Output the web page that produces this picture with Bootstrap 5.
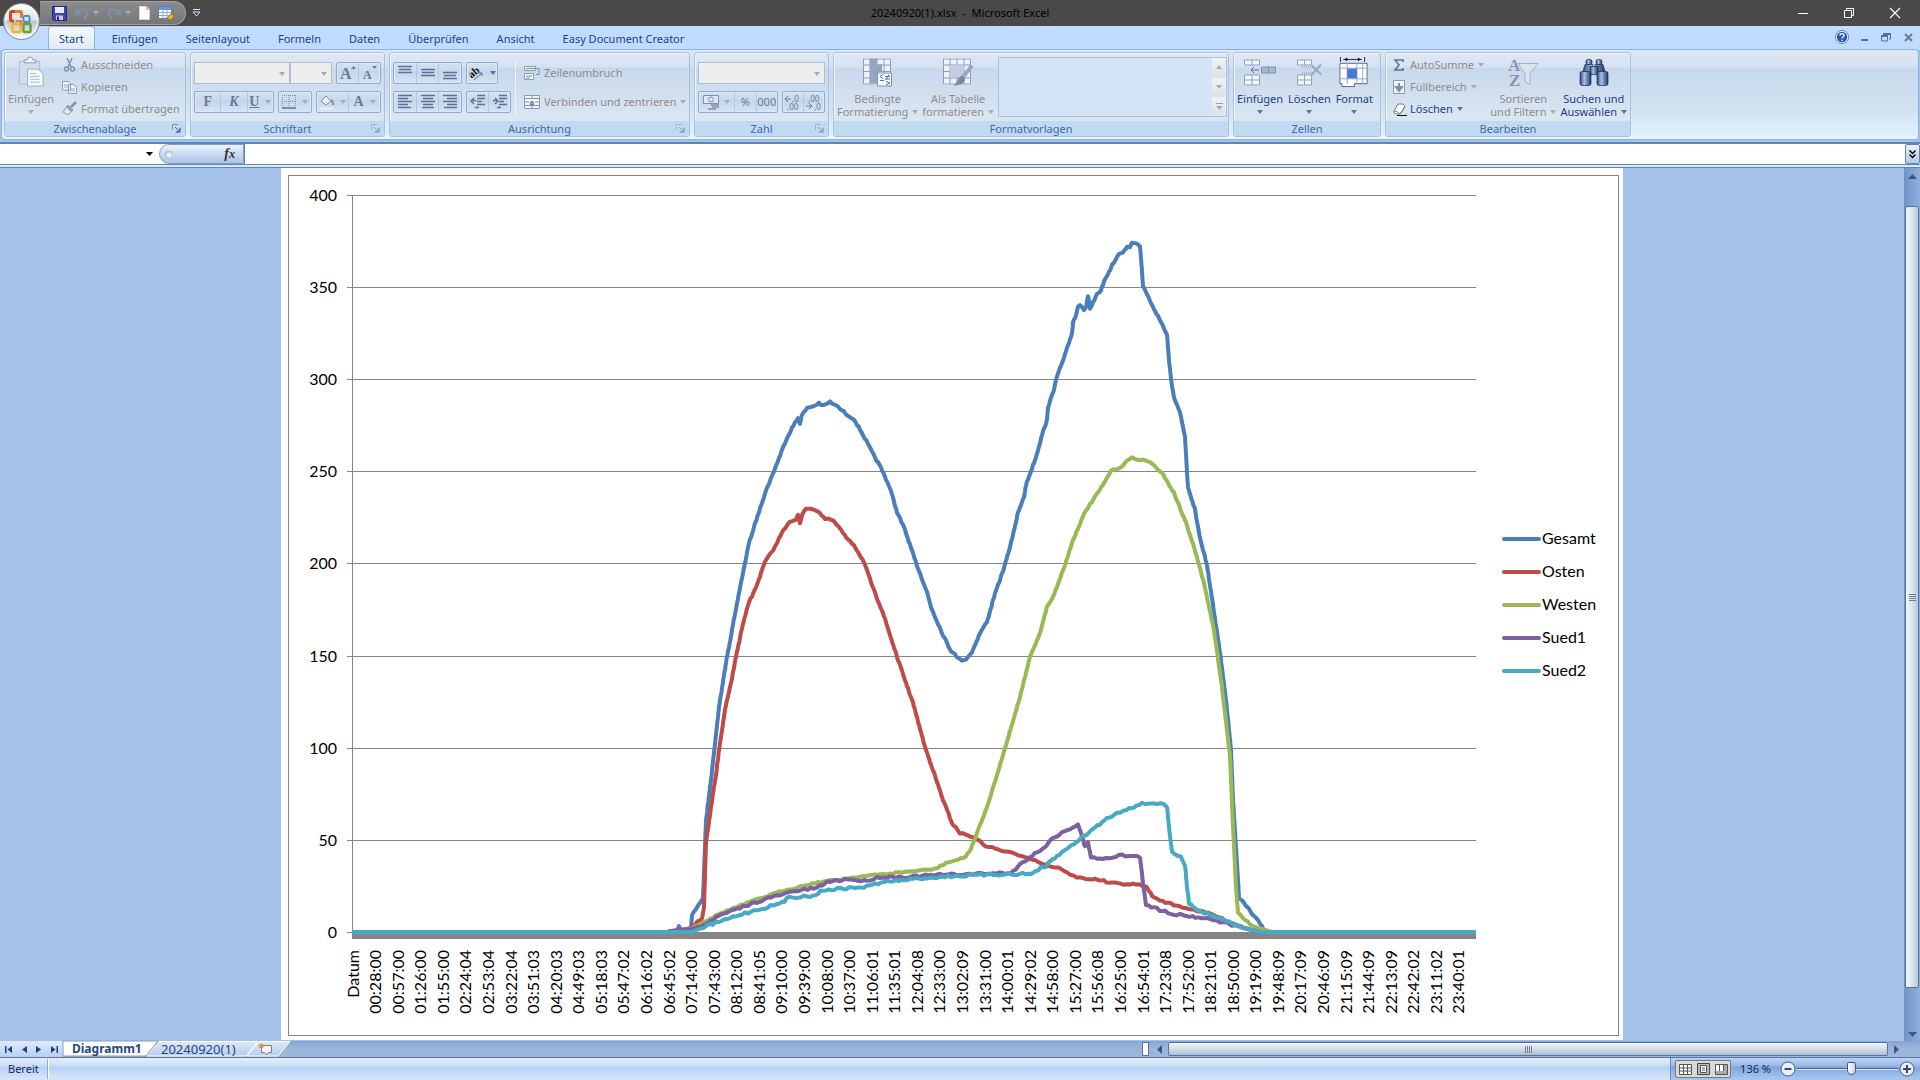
<!DOCTYPE html>
<html lang="de">
<head>
<meta charset="utf-8">
<meta name="viewport" content="width=device-width, initial-scale=1">
<title>20240920(1).xlsx - Microsoft Excel</title>
<link href="https://cdn.jsdelivr.net/npm/bootstrap@5.3.0/dist/css/bootstrap.min.css" rel="stylesheet">
<style>
:root{--ink:#1e3f86;--off:#8d8d8d;--line:#8db2e3;--deep:#5f86b5}
body{height:100vh;font:11px/16px "Noto Sans","Open Sans",sans-serif;color:var(--ink);background:#a3c1e9;overflow:hidden}
button,input,select{font:inherit;color:inherit}
svg{display:block;flex:none;overflow:visible}
.btn{--bs-btn-padding-x:0;--bs-btn-padding-y:0;--bs-btn-font-size:11px;--bs-btn-line-height:16px;--bs-btn-border-width:0;--bs-btn-border-radius:2px;--bs-btn-color:var(--ink);--bs-btn-disabled-color:var(--off);--bs-btn-disabled-opacity:1;white-space:nowrap}
.caret{width:0;height:0;border:3px solid transparent;border-top:4px solid #5674a8;border-bottom:0;flex:none}
:disabled .caret,.caret.dim{border-top-color:#a3abb5}
/* title bar */
.titlebar{height:26px;background:#4b4947;color:#000}
.quick{position:absolute;left:40px;top:1px;height:24px;width:146px;padding-left:12px;background:linear-gradient(#8b8b8b,#777);border:1px solid #a2a2a2;border-left:0;border-radius:0 12px 12px 0}
.orb{position:absolute;left:2px;top:2px;z-index:5}
.more{position:absolute;left:193px;top:9px}
.winbtns{position:absolute;right:2px;top:0;height:26px}
.winbtns .btn{width:46px;height:25px;display:grid;place-items:center}
/* tabs */
.tabrow{height:24px;background:#bfdbff;padding-left:48px}
.tabrow .nav-link{padding:5px 14px;color:var(--ink);border:0}
.tabrow .nav-link.active{height:24px;padding:4px 10px;margin-right:3px;background:linear-gradient(#f4f8fe,#dfe9f5);border:1px solid #91b4e4;border-bottom:0;border-radius:3px 3px 0 0}
.docbtns{padding-right:4px;gap:6px}
.docbtns .btn{width:16px;height:22px;display:grid;place-items:center}
/* ribbon */
.ribbon{height:91px;margin:-1px 1px 0;padding:2px;gap:4px;border:1px solid var(--line);border-radius:4px;background:linear-gradient(#dde7f3 0,#d5e1f1 17px,#c8d8ed 18px,#d3e2f1 60px,#e2f2fd 88px);box-shadow:inset 0 -2px 0 #e8f6ff}
.rgroup{flex:none;height:85px;border:1px solid #a8c3de;border-radius:3px;box-shadow:inset 1px 1px 0 #eef5fc;background:linear-gradient(#dfe8f4 0,#d6e2f1 14px,#c8d8ec 15px,#dbe6f2 67px)}
.gbody{height:68px;padding:0 3px}
.gname{height:15px;background:#c1d9f1;color:#3e6aaa;position:relative;text-align:center;line-height:15px}
.launch{position:absolute;right:4px;top:3px}
.w-clip{width:182px}.w-font{width:195px}.w-align{width:301px}.w-num{width:135px}.w-style{width:396px}.w-cell{width:148px}.w-edit{width:246px}
.big{display:flex;flex-direction:column;align-items:center;padding-top:4px!important;line-height:13px!important}
.big svg{margin-bottom:4px;height:31px}
.big .caret{margin-top:5px}
.big .two{display:flex;align-items:center;gap:4px}
.big .two .caret{margin-top:0}
.stack{padding-top:1px}
.line22{height:22px;display:flex!important;align-items:center;gap:4px}
.strip{height:22px;border:1px solid #8fadd3;border-radius:2px;background:linear-gradient(#d6e2f1,#c6d6ea 45%,#d5e2f0);box-shadow:inset 0 0 0 1px #dce8f5}
.strip .btn{flex:1;display:flex;align-items:center;justify-content:center;gap:6px;height:20px;border-radius:0;--bs-btn-disabled-color:#66799c}
.strip .btn+.btn{border-left:1px solid #b3c8e2}
.boxsel{height:22px;border:1px solid #b0bfd0;background:#eee;border-radius:0;appearance:none;opacity:1}
.selwrap{position:relative;display:flex}
.selwrap .caret{position:absolute;right:5px;top:10px;pointer-events:none}
.serif{font-family:"Liberation Serif",serif;font-weight:700;font-size:14px}
.rows{padding-top:9px;gap:7px}
.vrule{width:1px;height:55px;background:#9db9dc;border-right:1px solid #eef5fc;box-sizing:content-box}
.gallery{flex:none;width:229px;height:60px;border:1px solid #a8c3e2;background:#d4e4f6}
.gallery .btn{width:14px;flex:1;background:linear-gradient(#f1f2f3,#dfe2e6);display:grid;place-items:center;border-radius:0}
/* formula bar */
.fbar{height:26px;border-top:2px solid var(--deep);background:#dbe8f8;border-bottom:1px solid var(--deep);margin-top:2px}
.fbar>div{height:21px;background:#fff;border-bottom:1px solid var(--deep)}
.namebox{width:140px;border:0;outline:0;height:20px}
.fx{width:85px;height:20px;border:1px solid #7f9ec9;border-radius:10px 0 0 10px;background:linear-gradient(#eef4fd,#c9daf2 50%,#a9c2e6)}
.finput{border:0;border-left:1px solid var(--deep);outline:0;height:20px}
.fexp{width:15px;height:20px;border:1px solid var(--deep)!important;background:linear-gradient(#eaf2fc,#b2cbed)!important;display:grid!important;place-items:center}
/* work area */
.work{min-height:0;background:#a3c1e9}
.holder{padding-bottom:1px}
.sheet{height:100%;aspect-ratio:1342/872;background:#fff}
.sheet svg{width:100%;height:100%}
.chart text{font-family:Lato,sans-serif;font-size:16px;fill:#000}
.vscroll{width:16px;background:linear-gradient(90deg,#6f92c6,#8fb0df);padding:6px 0 4px}
.vthumb{width:14px;flex:781;border:1px solid #56729f;border-radius:2px;background:linear-gradient(90deg,#f5f8fc,#dce4ee 50%,#b9c8db)}
/* sheet tabs */
.sheetbar{height:17px;background:linear-gradient(#85a5d3,#9ab4da 40%,#9db7dc);border-bottom:1px solid #5577a8}
.sheetnav{width:63px;height:16px;background:linear-gradient(#e0ebfa,#b7cff0)}
.stab{height:16px;position:relative;display:flex;align-items:center;text-decoration:none;color:#27467f;font-size:12px}
.stab svg{position:absolute;left:0;top:0;z-index:-1}
.s1{width:84px;padding-left:9px;z-index:3}.s2{width:100px;padding-left:14px;z-index:2;font-size:13px}.s3{width:42px;padding-left:8px;z-index:1}
.splitter{width:7px;height:14px;border:1px solid #5577a8;background:#fff}
.hthumb{width:720px;height:14px;border:1px solid #56729f;border-radius:2px;background:linear-gradient(#f2f5f9,#d7dee8 45%,#adbdd3)}
.grip{width:7px;height:7px;background:repeating-linear-gradient(90deg,#6b7e9a 0 1px,#fff0 1px 2px)}
.grip.up{background:repeating-linear-gradient(#6b7e9a 0 1px,#fff0 1px 2px)}
/* status bar */
.status{height:22px;background:linear-gradient(#e6effc 0,#c9dcf7 8px,#b5cff3 9px,#d4e4f8 20px);color:#15285b}
.status .rt{background:linear-gradient(#bdd3f3 0,#97b8e6 8px,#7fa6de 9px,#a5c4ee 20px);border-left:1px solid #6b8fc4;gap:1px;padding:0 5px 0 4px}
.status .pct{padding:0 8px;font-size:11px}
.vsep{width:1px;height:20px;background:#8eaedd;border-right:1px solid #fff;box-sizing:content-box}
.views{width:56px;height:18px;border:1px solid #777;border-radius:2px;background:#d9d9d9}
.views .btn{flex:1;display:grid;place-items:center}
.zoomer{width:101px;appearance:none;background:none;height:18px;margin:0}
.zoomer::-webkit-slider-runnable-track{height:2px;background:linear-gradient(#4a6799 50%,#dbe8fa 50%)}
.zoomer::-webkit-slider-thumb{appearance:none;width:9px;height:13px;margin-top:-6px;border:1px solid #42597f;border-radius:2px 2px 5px 5px;background:linear-gradient(90deg,#fff,#c9d6ea)}
</style>
</head>
<body class="d-flex flex-column">

<svg width="0" height="0" class="position-absolute" aria-hidden="true">
  <defs>
    <linearGradient id="gOrb" x1="0" y1="0" x2="0" y2="1"><stop offset="0" stop-color="#fff"/><stop offset=".45" stop-color="#dfe3ea"/><stop offset=".5" stop-color="#bcc4d2"/><stop offset="1" stop-color="#fdfdff"/></linearGradient>
    <linearGradient id="gTube" x1="0" x2="1"><stop offset="0" stop-color="#2c4778"/><stop offset=".4" stop-color="#a9bfe4"/><stop offset="1" stop-color="#1d3566"/></linearGradient>
    <linearGradient id="gTab" x1="0" y1="0" x2="0" y2="1"><stop offset="0" stop-color="#dfeafa"/><stop offset="1" stop-color="#b5ccee"/></linearGradient>
    <symbol id="launch" viewBox="0 0 9 9"><path d="M.5 6V.5H6M3.5 8.500h5v-5" fill="none" stroke="#7291bd"/><path d="M3 3l4 4M7.500 4v3.500H4" stroke="#4b6fa5" fill="none"/></symbol>
    <symbol id="tbl" viewBox="0 0 28 26"><path d="M.5.500h27v25H.5z" fill="#edf2fa"/><path d="M.5.500h27v25H.5zM7 0v26M14 0v26M21 0v26M0 6.500h28M0 13h28M0 19.500h28" fill="none" stroke="#8c9ebb"/></symbol>
  </defs>
</svg>

<header class="titlebar position-relative d-flex justify-content-center align-items-center flex-shrink-0">
  <button class="btn orb" aria-label="Office-Schaltfläche">
    <svg width="39" height="39" viewBox="0 0 39 39"><circle cx="19.500" cy="19.500" r="18" fill="url(#gOrb)" stroke="#7f8796"/><circle cx="19.500" cy="19.500" r="16" fill="none" stroke="#fff" opacity=".8"/>
      <g fill="none"><path d="M16 9.500h-6q-1.500 0-1.500 1.500v6.500q0 1.500 1.500 1.500h2" stroke="#d9481c" stroke-width="3"/><path d="M13 9.500h5q1.500 0 1.500 1.500v5" stroke="#ee7a1c" stroke-width="3"/><rect x="21.500" y="14" width="6" height="6" rx="1" stroke="#4b90d0" stroke-width="2"/><rect x="10.500" y="22" width="8" height="8" rx="1" stroke="#f2b822" stroke-width="2.500"/><path d="M14 19h5v4" stroke="#e8652a" stroke-width="1.500"/><rect x="21.500" y="22" width="7" height="8" rx="1" stroke="#6aa436" stroke-width="2.500"/></g></svg>
  </button>
  <div class="quick d-flex align-items-center">
    <button class="btn" aria-label="Speichern"><svg width="15" height="15" viewBox="0 0 15 15"><path d="M.5.500h14v14H2L.5 13z" fill="#3b46b4" stroke="#23297c"/><path d="M3 1h9v6H3z" fill="#e9ecfb"/><path d="M4 9.500h7V14H4z" fill="#c4c9e8"/><path d="M5 10.500h2V14H5z" fill="#23297c"/></svg></button>
    <button class="btn ms-2" disabled aria-label="Rückgängig"><svg width="14" height="14" viewBox="0 0 14 14"><path d="M3 6c3-4 9-3 9 1 0 3-2 4-3 6" fill="none" stroke="#7c8fad" stroke-width="2.500"/><path d="M0 3v6h6z" fill="#7c8fad"/></svg></button>
    <span class="caret dim ms-1"></span>
    <button class="btn ms-2" disabled aria-label="Wiederholen"><svg width="14" height="14" viewBox="0 0 14 14"><path d="M11 6C8 2 2 3 2 7c0 3 2 4 3 6" fill="none" stroke="#7c8fad" stroke-width="2.500"/><path d="M14 3v6H8z" fill="#7c8fad"/></svg></button>
    <span class="caret dim ms-1"></span>
    <button class="btn ms-2" aria-label="Neu"><svg width="11" height="14" viewBox="0 0 11 14"><path d="M.5.500h7l3 3v10H.5z" fill="#fff" stroke="#cfd5df"/><path d="M7.500.500v3h3" fill="#dce2ec" stroke="#aeb6c4"/></svg></button>
    <button class="btn ms-2" aria-label="Tabelle"><svg width="17" height="15" viewBox="0 0 17 15"><path d="M.5.500h13v12H.5z" fill="#fff" stroke="#5c7fb5"/><path d="M1 1h12v3H1z" fill="#6c96d8"/><path d="M1 6.500h12M1 9.500h12M5 4v8M9 4v8" stroke="#8dabd6"/><path d="M9 12l4-4 3 2-3 4z" fill="#e6b54b" stroke="#a87720"/></svg></button>
  </div>
  <svg class="more" width="7" height="8" viewBox="0 0 7 8"><path d="M0 .500h7" stroke="#dfe6f3"/><path d="M0 3h7L3.500 7z" fill="#2b3f74" stroke="#dfe6f3"/></svg>
  <span>20240920(1).xlsx&nbsp; -&nbsp; Microsoft Excel</span>
  <div class="winbtns d-flex">
    <button class="btn" aria-label="Minimieren"><svg width="10" height="10"><path d="M0 5.500h10" stroke="#fff"/></svg></button>
    <button class="btn" aria-label="Wiederherstellen"><svg width="10" height="10"><path d="M.5 2.500h7v7h-7zM2.500 2V.500h7v7H8" fill="none" stroke="#fff"/></svg></button>
    <button class="btn" aria-label="Schließen"><svg width="10" height="10"><path d="M0 0l10 10M10 0L0 10" stroke="#fff" stroke-width="1.200"/></svg></button>
  </div>
</header>

<nav class="tabrow nav flex-nowrap flex-shrink-0 align-items-start">
  <a class="nav-link active" href="#">Start</a><a class="nav-link" href="#">Einfügen</a><a class="nav-link" href="#">Seitenlayout</a><a class="nav-link" href="#">Formeln</a><a class="nav-link" href="#">Daten</a><a class="nav-link" href="#">Überprüfen</a><a class="nav-link" href="#">Ansicht</a><a class="nav-link" href="#">Easy Document Creator</a>
  <div class="docbtns d-flex ms-auto">
    <button class="btn" aria-label="Hilfe"><svg width="14" height="14" viewBox="0 0 14 14"><circle cx="7" cy="7" r="6.500" fill="#fff" stroke="#5a7fc4"/><circle cx="7" cy="7" r="5.200" fill="#2456c8"/><path d="M5 5.500c0-2.500 4-2.500 4 0C9 7 7 7 7 8.500M7 9.700v1.300" fill="none" stroke="#fff" stroke-width="1.400"/></svg></button>
    <button class="btn" aria-label="Fenster minimieren"><svg width="8" height="10"><path d="M1 8h7" stroke="#5b6f8f" stroke-width="2"/></svg></button>
    <button class="btn" aria-label="Fenster wiederherstellen"><svg width="10" height="9"><path d="M.5 3h6v5h-6zM2.500 1h7v5H8" fill="none" stroke="#5b6f8f"/><path d="M2 1h8M0 3h7" stroke="#5b6f8f" stroke-width="2"/></svg></button>
    <button class="btn" aria-label="Fenster schließen"><svg width="9" height="9"><path d="M1 1l7 7M8 1L1 8" stroke="#6a7b96" stroke-width="2"/></svg></button>
  </div>
</nav>

<section class="ribbon d-flex flex-shrink-0 position-relative">
  <div class="rgroup w-clip">
    <div class="gbody d-flex">
      <button class="btn big" disabled><svg width="28" height="31" viewBox="0 0 28 32"><path d="M2 4.500h21V28H2z" fill="#d3deed" stroke="#a9bad2"/><path d="M7 6V3h3a3 3 0 016 0h3v3z" fill="#eef2f8" stroke="#8d9db5"/><path d="M10.500 12.500h11l5 5V30h-16z" fill="#f5f8fc" stroke="#98aac6"/><path d="M13 17h6M13 20h10M13 23h10M13 26h10" stroke="#a9b9d2"/></svg>Einfügen<span class="caret"></span></button>
      <div class="ms-2 d-flex flex-column stack">
        <button class="btn line22" disabled><svg width="15" height="14" viewBox="0 0 15 14"><path d="M5 0l4 9M10 0L6 9" stroke="#7f90ab" stroke-width="1.500"/><circle cx="4.500" cy="11" r="2" fill="none" stroke="#7f90ab" stroke-width="1.500"/><circle cx="10.500" cy="11" r="2" fill="none" stroke="#7f90ab" stroke-width="1.500"/></svg>Ausschneiden</button>
        <button class="btn line22" disabled><svg width="15" height="13" viewBox="0 0 15 13"><path d="M.5.500h6l2 2V9h-8zM6.500 3.500h5l3 3v6h-8z" fill="#f2f6fb" stroke="#8b9cb9"/><path d="M2 4h4M2 6h4M8 8h5M8 10h5" stroke="#9aaac4"/></svg>Kopieren</button>
        <button class="btn line22" disabled><svg width="15" height="14" viewBox="0 0 15 14"><path d="M14 0L9 5" stroke="#7f90ab" stroke-width="2.500"/><path d="M6 3l5 5-5 5-5-3z" fill="#e3eaf4" stroke="#8b9cb9"/><path d="M6 3l5 5-2 2-5-5z" fill="#8ea1bf"/></svg>Format übertragen</button>
      </div>
    </div>
    <div class="gname">Zwischenablage<svg class="launch" width="9" height="9"><use href="#launch"/></svg></div>
  </div>

  <div class="rgroup w-font">
    <div class="gbody d-flex flex-column rows">
      <div class="d-flex">
        <div class="selwrap flex-grow-1"><select class="boxsel w-100" disabled aria-label="Schriftart"></select><span class="caret dim"></span></div>
        <div class="selwrap me-1"><select class="boxsel" style="width:42px" disabled aria-label="Schriftgrad"></select><span class="caret dim"></span></div>
        <div class="strip d-flex" style="width:45px"><button class="btn" disabled aria-label="Schriftgrad vergrößern"><svg width="16" height="14"><text x="0" y="13" font-family="Liberation Serif" font-weight="700" font-size="16" fill="#66799c">A</text><path d="M11 3h5l-2.500-3z" fill="#66799c"/></svg></button><button class="btn" disabled aria-label="Schriftgrad verkleinern"><svg width="14" height="14"><text x="0" y="13" font-family="Liberation Serif" font-weight="700" font-size="12" fill="#66799c">A</text><path d="M9 0h5l-2.500 3z" fill="#66799c"/></svg></button></div>
      </div>
      <div class="d-flex gap-1">
        <div class="strip d-flex" style="width:80px"><button class="btn serif" disabled>F</button><button class="btn serif fst-italic" disabled>K</button><button class="btn serif" disabled><u>U</u><span class="caret"></span></button></div>
        <div class="strip d-flex" style="width:34px"><button class="btn" disabled aria-label="Rahmen"><svg width="14" height="14" viewBox="0 0 14 14"><path d="M.5 0v12M7 0v12M13.500 0v12M0 .500h14M0 6.500h14" stroke="#7e90ae" stroke-dasharray="1 1"/><path d="M0 13h14" stroke="#5c7094" stroke-width="1.500"/></svg><span class="caret"></span></button></div>
        <div class="strip d-flex flex-grow-1"><button class="btn" disabled aria-label="Füllfarbe"><svg width="14" height="15" viewBox="0 0 14 15"><path d="M1 6l5-5 5 5-5 4z" fill="#e9eef6" stroke="#7e90ae"/><path d="M11 5c2 1 2 3 2 5" stroke="#7e90ae" stroke-width="2" fill="none"/><path d="M0 12h14v3H0z" fill="#e6e9ee"/></svg><span class="caret"></span></button><button class="btn serif" disabled>A<span class="caret"></span></button></div>
      </div>
    </div>
    <div class="gname">Schriftart<svg class="launch" width="9" height="9" opacity=".5"><use href="#launch"/></svg></div>
  </div>

  <div class="rgroup w-align">
    <div class="gbody d-flex">
      <div class="d-flex flex-column rows">
        <div class="d-flex gap-1">
          <div class="strip d-flex" style="width:69px" data-lines="top,mid,bot"></div>
          <div class="strip d-flex" style="width:32px"><button class="btn" aria-label="Ausrichtung"><svg width="16" height="15" viewBox="0 0 16 15"><text x="1" y="10" transform="rotate(-40 6 8)" font-size="11" font-weight="700" font-family="Liberation Serif" fill="#111">ab</text><path d="M6 14l8-7M11 7h3v3" stroke="#56688c" fill="none"/></svg><span class="caret ms-n1"></span></button></div>
        </div>
        <div class="d-flex gap-1">
          <div class="strip d-flex" style="width:69px" data-lines="left,center,right"></div>
          <div class="strip d-flex" style="width:45px" data-lines="out,in"></div>
        </div>
      </div>
      <div class="vrule ms-1 me-2 mt-2"></div>
      <div class="d-flex flex-column rows">
        <button class="btn line22" disabled><svg width="16" height="14" viewBox="0 0 16 14"><path d="M.5.500h11v4H.5zM.5 7.500h9v6h-9z" fill="#f2f6fb" stroke="#8b9cb9"/><path d="M2 2.500h13v6h-3M2 10h6M2 12h4" fill="none" stroke="#7e90ae"/></svg>Zeilenumbruch</button>
        <button class="btn line22" disabled><svg width="16" height="14" viewBox="0 0 16 14"><path d="M.5.500h15v13H.5z" fill="#f2f6fb" stroke="#8b9cb9"/><path d="M0 3.500h16M0 10.500h16M8 0v3M8 11v3M1 7h4M11 7h4" stroke="#7e90ae"/><text x="5.500" y="10" font-size="9" font-weight="700" font-family="Liberation Serif" fill="#56688c">a</text></svg>Verbinden und zentrieren<span class="caret"></span></button>
      </div>
    </div>
    <div class="gname">Ausrichtung<svg class="launch" width="9" height="9" opacity=".5"><use href="#launch"/></svg></div>
  </div>

  <div class="rgroup w-num">
    <div class="gbody d-flex flex-column rows">
      <div class="selwrap"><select class="boxsel w-100" disabled aria-label="Zahlenformat"></select><span class="caret dim"></span></div>
      <div class="d-flex gap-1">
        <div class="strip d-flex" style="width:80px"><button class="btn px-1 gap-1" disabled aria-label="Währung"><svg width="17" height="15" viewBox="0 0 17 15"><path d="M.5.500h15v8H.5z" fill="#dfe6f0" stroke="#7e90ae"/><circle cx="8" cy="4.500" r="2.500" fill="none" stroke="#7e90ae"/><path d="M8 10h8M9 12h7M5 14h8" stroke="#7e90ae" stroke-width="1.500"/></svg><span class="caret"></span></button><button class="btn" disabled>%</button><button class="btn" disabled>000</button></div>
        <div class="strip d-flex flex-grow-1"><button class="btn" disabled aria-label="Dezimalstelle hinzufügen"><svg width="16" height="15"><path d="M0 4h6M3 1L0 4l3 3" stroke="#66799c" fill="none"/><text x="7" y="7" font-size="8" fill="#66799c">,0</text><text x="2" y="15" font-size="8" fill="#66799c">,00</text></svg></button><button class="btn" disabled aria-label="Dezimalstelle löschen"><svg width="16" height="15"><text x="2" y="7" font-size="8" fill="#66799c">,00</text><path d="M0 11h6M3 8l3 3-3 3" stroke="#66799c" fill="none"/><text x="8" y="15" font-size="8" fill="#66799c">,0</text></svg></button></div>
      </div>
    </div>
    <div class="gname">Zahl<svg class="launch" width="9" height="9" opacity=".5"><use href="#launch"/></svg></div>
  </div>

  <div class="rgroup w-style">
    <div class="gbody d-flex gap-1">
      <button class="btn big" disabled><svg width="30" height="30" viewBox="0 0 30 30"><use href="#tbl" x="0" y="1" width="28" height="26"/><path d="M7 1h7v6h5v7h-3v6h-2v6H7z" fill="#93a5c3"/><path d="M14.500 15.500h14v13h-14z" fill="#f5f8fc" stroke="#8395b5"/><path d="M20 17l-3 2 3 2M17 23h4M22 19h5M22 21.500h5M26 17l-3 5M23 24l4 1.500-4 2" stroke="#5f7397" fill="none"/></svg>Bedingte<span class="two">Formatierung<span class="caret"></span></span></button>
      <button class="btn big" disabled><svg width="30" height="30" viewBox="0 0 30 30"><use href="#tbl" x="0" y="1" width="28" height="26"/><path d="M7 7.500h14v12H7z" fill="#c3cfe1"/><path d="M29 8L19 21" stroke="#98a9c5" stroke-width="4"/><path d="M19 18l3 3c0 5-5 7-12 7 5-2 4-8 9-10z" fill="#7488ab"/></svg>Als Tabelle<span class="two">formatieren<span class="caret"></span></span></button>
      <div class="gallery d-flex mt-1 ms-auto"><div class="flex-grow-1"></div><div class="d-flex flex-column" style="gap:1px"><button class="btn" disabled aria-label="Nach oben"><span class="caret" style="transform:rotate(180deg)"></span></button><button class="btn" disabled aria-label="Nach unten"><span class="caret"></span></button><button class="btn" disabled aria-label="Mehr"><svg width="7" height="7"><path d="M0 .500h7" stroke="#9aa3ad"/><path d="M0 3h7L3.500 7z" fill="#a3abb5"/></svg></button></div></div>
    </div>
    <div class="gname">Formatvorlagen</div>
  </div>

  <div class="rgroup w-cell">
    <div class="gbody d-flex justify-content-between">
      <button class="btn big"><svg width="32" height="30" viewBox="0 0 32 30"><path d="M.5 2.500h15v5H.5zM.5 17.500h15v10H.5zM8 2.500v5M8 17.500v10M.5 22.500h15" fill="#f2f6fb" stroke="#8fa1bf"/><path d="M17.500 9.500h14v6h-14zM24.500 9v7" fill="#a9b8cf" stroke="#7e90ae"/><path d="M15 12.500H7M10 9.500l-3 3 3 3" stroke="#5f7397" fill="none"/></svg>Einfügen<span class="caret"></span></button>
      <button class="btn big"><svg width="28" height="30" viewBox="0 0 28 30"><path d="M2.500 2.500h14v5h-14zM2.500 17.500h14v10h-14zM9.500 2.500v5M9.500 17.500v10M2.500 22.500h14" fill="#f2f6fb" stroke="#8fa1bf"/><path d="M7 9.500h12M7 15.500h12" stroke="#7e90ae" stroke-dasharray="1 1"/><path d="M17 8l9 9M26 7L16 18" stroke="#9aa9c2" stroke-width="2"/></svg>Löschen<span class="caret"></span></button>
      <button class="btn big me-1"><svg width="30" height="31" viewBox="0 0 30 32"><path d="M1 0v5M26 0v5M4 2.500h19" stroke="#222"/><path d="M5 2.500l3-2v4zM22 2.500l-3-2v4z"/><path d="M.5 6.500h28v21h-13v3H2.500v-3h-2z" fill="#fff" stroke="#54688c"/><path d="M8 6v22M18 6v22M24 6v22M1 11.500h27M1 22.500h27" stroke="#8fa6cc"/><path d="M8 12h10v10H8z" fill="#4778d8"/></svg>Format<span class="caret"></span></button>
    </div>
    <div class="gname">Zellen</div>
  </div>

  <div class="rgroup w-edit">
    <div class="gbody d-flex">
      <div class="d-flex flex-column stack ps-1">
        <button class="btn line22" disabled><svg width="13" height="12"><path d="M10 3V1H2l4 5-4 5h8V9" fill="none" stroke="#5d7196" stroke-width="1.600"/></svg>AutoSumme<span class="caret"></span></button>
        <button class="btn line22" disabled><svg width="13" height="14"><path d="M.5.500h11v13H.5z" fill="#f2f6fb" stroke="#8b9cb9"/><path d="M6 3v5M3 7l3 4 3-4z" fill="#7e90ae" stroke="#7e90ae" stroke-width="2"/></svg>Füllbereich<span class="caret"></span></button>
        <button class="btn line22"><svg width="13" height="13"><path d="M5 1h5q3 1 1 4l-4 6H3Q0 10 1 8z" fill="#fff" stroke="#6f7f9a"/><path d="M1 8q3 0 6 3l5-7" fill="none" stroke="#6f7f9a"/><path d="M4 12.500h10" stroke="#111"/></svg>Löschen<span class="caret"></span></button>
      </div>
      <button class="btn big ms-auto" disabled><svg width="30" height="30" viewBox="0 0 30 30"><path d="M10 6h20l-8 10v11l-5-3v-8z" fill="#dbe3ee" stroke="#a3b1c8"/><g font-family="Liberation Serif" font-weight="700" font-size="17" fill="#8496b5"><text x="0" y="13">A</text><text x="1" y="28">Z</text></g></svg>Sortieren<span class="two">und Filtern<span class="caret"></span></span></button>
      <button class="btn big ms-1"><svg width="28" height="30" viewBox="0 0 28 30"><g fill="url(#gTube)" stroke="#1b2f5c" stroke-width=".7"><rect x="6" y="2" width="6" height="5" rx="2"/><rect x="16" y="2" width="6" height="5" rx="2"/><path d="M5 7h8v7H3zM15 7h8l2 7H15z"/><rect x="10" y="9" width="8" height="8"/><rect x="0" y="14" width="11" height="14" rx="2"/><rect x="17" y="14" width="11" height="14" rx="2"/></g></svg>Suchen und<span class="two">Auswählen<span class="caret"></span></span></button>
    </div>
    <div class="gname">Bearbeiten</div>
  </div>
</section>

<div class="fbar flex-shrink-0">
  <div class="d-flex align-items-center">
    <input class="namebox" aria-label="Namenfeld">
    <svg width="19" height="5"><path d="M6 0h7L9.500 4z"/></svg>
    <button class="btn fx d-flex align-items-center justify-content-between ps-1 pe-2" aria-label="Funktion einfügen"><svg width="9" height="9"><circle cx="4.500" cy="4.500" r="4" fill="#b6c4d8"/><circle cx="5" cy="5" r="2.500" fill="#eaf0f9"/></svg><em class="serif" style="color:#333">f<small>x</small></em></button>
    <input class="finput flex-grow-1" aria-label="Bearbeitungsleiste">
    <button class="btn fexp" aria-label="Erweitern"><svg width="7" height="8"><path d="M.5.500l3 3 3-3M.5 4.500l3 3 3-3" fill="none" stroke="#000" stroke-width="1.500"/></svg></button>
  </div>
</div>

<main class="work flex-grow-1 d-flex">
  <div class="holder flex-grow-1 d-flex justify-content-center overflow-hidden">
    <div class="sheet">
      <svg class="chart" id="chart" viewBox="281 168 1342 872" preserveAspectRatio="none" role="img" aria-label="Diagramm">
        <rect x="288.500" y="175.500" width="1330" height="860" fill="#fff" stroke="#868686"/>
        <g id="grid" stroke="#868686" shape-rendering="crispEdges"></g>
        <rect x="352" y="932" width="1124" height="7" fill="#868686"/>
        <g id="ylab" text-anchor="end"></g>
        <g id="xlab" text-anchor="end"></g>
        <g id="curves" fill="none" stroke-width="4" stroke-linejoin="round"></g>
        <g id="legend"></g>
      </svg>
    </div>
  </div>
  <div class="vscroll d-flex flex-column align-items-center">
    <svg width="9" height="5"><path d="M0 5h9L4.500 0z" fill="#3d5787"/></svg>
    <div style="flex:27"></div>
    <div class="vthumb d-flex align-items-center justify-content-center"><span class="grip up"></span></div>
    <div style="flex:44"></div>
    <svg width="9" height="5"><path d="M0 0h9L4.500 5z" fill="#3d5787"/></svg>
  </div>
</main>

<div class="sheetbar d-flex flex-shrink-0 align-items-center">
  <div class="sheetnav d-flex align-items-center justify-content-around">
    <button class="btn" aria-label="Erstes Blatt"><svg width="7" height="7"><path d="M0 0h1.500v7H0zM7 0v7L2.500 3.500z" fill="#1f3f84"/></svg></button>
    <button class="btn" aria-label="Voriges Blatt"><svg width="5" height="7"><path d="M5 0v7L0 3.500z" fill="#1f3f84"/></svg></button>
    <button class="btn" aria-label="Nächstes Blatt"><svg width="5" height="7"><path d="M0 0v7l5-3.500z" fill="#1f3f84"/></svg></button>
    <button class="btn" aria-label="Letztes Blatt"><svg width="7" height="7"><path d="M7 0H5.500v7H7zM0 0v7l4.500-3.500z" fill="#1f3f84"/></svg></button>
  </div>
  <a class="stab s1 fw-bold" href="#"><svg width="96" height="16"><path d="M0 0h95L83 15H0z" fill="#fff" stroke="#7f9cc8"/></svg>Diagramm1</a>
  <a class="stab s2" href="#"><svg width="112" height="16"><path d="M0 15L12 .500h99L99 15z" fill="url(#gTab)" stroke="#fff"/></svg>20240920(1)</a>
  <a class="stab s3" href="#" aria-label="Tabellenblatt einfügen"><svg width="44" height="16"><path d="M0 15L12 .500h31L31 15z" fill="url(#gTab)" stroke="#fff"/><path d="M14.500 4.500h10v7h-3l-2 2-2-2h-3z" fill="#f2f4f8" stroke="#6f7f9a"/><path d="M14 2v6M11 5h6M12 3l4 4M16 3l-4 4" stroke="#e08a1e"/></svg></a>
  <div class="ms-auto d-flex align-items-center">
    <span class="splitter"></span>
    <svg width="19" height="9"><path d="M13 0v9L8 4.500z" fill="#3d5787"/></svg>
    <div class="hthumb d-flex align-items-center justify-content-center"><span class="grip"></span></div>
    <svg width="32" height="9"><path d="M6 0v9l5-4.500z" fill="#3d5787"/></svg>
  </div>
</div>

<footer class="status d-flex flex-shrink-0 align-items-center">
  <span class="ps-2 pe-2">Bereit</span><span class="vsep"></span>
  <div class="rt ms-auto h-100 d-flex align-items-center">
    <div class="views d-flex">
      <button class="btn" aria-label="Normal"><svg width="13" height="11"><path d="M.5.500h12v10H.5zM4.500 0v11M8.500 0v11M0 4h13M0 7h13" fill="#fff" stroke="#555"/></svg></button>
      <button class="btn" aria-label="Seitenlayout"><svg width="13" height="12"><path d="M.5.500h12v11H.5z" fill="#bbb" stroke="#444"/><path d="M3.500 2.500h6v7h-6z" fill="#fff" stroke="#555"/><path d="M5 5h3M5 7h3" stroke="#666"/></svg></button>
      <button class="btn" aria-label="Umbruchvorschau"><svg width="13" height="11"><path d="M.5.500h12v10H.5z" fill="#aaa" stroke="#555"/><path d="M1 1h7v6H1z" fill="#fff"/><path d="M4.500 1v6M8.500 1v6" stroke="#555"/></svg></button>
    </div>
    <span class="pct">136 %</span>
    <button class="btn" aria-label="Verkleinern"><svg width="16" height="16"><circle cx="8" cy="8" r="7" fill="#e8eff9" stroke="#4a5f8a"/><path d="M4.500 8h7" stroke="#3a4a6a" stroke-width="2"/></svg></button>
    <input type="range" class="zoomer" min="0" max="100" value="54" aria-label="Zoom">
    <button class="btn" aria-label="Vergrößern"><svg width="16" height="16"><circle cx="8" cy="8" r="7" fill="#e8eff9" stroke="#4a5f8a"/><path d="M4 8h8M8 4v8" stroke="#3a4a6a" stroke-width="2"/></svg></button>
  </div>
</footer>

<script src="https://cdn.jsdelivr.net/npm/bootstrap@5.3.0/dist/js/bootstrap.bundle.min.js"></script>
<script>
// Alignment glyphs: each entry lists [x1, x2, y] strokes
const glyphs = {
  top:[[0,14,1],[1,13,4],[0,14,7]], mid:[[0,14,4],[1,13,7],[0,14,10]], bot:[[0,14,7],[1,13,10],[0,14,13]],
  left:[[0,14,1],[0,10,4],[0,14,7],[0,10,10],[0,13,13]], center:[[0,14,1],[2,12,4],[0,14,7],[2,12,10],[1,13,13]],
  right:[[0,14,1],[4,14,4],[0,14,7],[4,14,10],[1,14,13]],
  out:[[6,14,1],[6,14,4],[0,5,6],[6,11,7],[6,14,10],[4,8,13]], in:[[6,14,1],[6,14,4],[0,5,6],[6,11,7],[6,14,10],[4,8,13]]
};
document.querySelectorAll('[data-lines]').forEach(box => {
  box.innerHTML = box.dataset.lines.split(',').map(n => `<button class="btn" disabled aria-label="${n}"><svg width="14" height="14"><path d="${glyphs[n].map(([a,b,y])=>`M${a} ${y-.5}H${b}`).join('')}${n==='out'?'M3 3l-3 3 3 3':n==='in'?'M2 3l3 3-3 3':''}" stroke="#5d7196" stroke-width="1.300" fill="none"/></svg></button>`).join('');
});

const byId = id => document.getElementById(id);
const X0 = 352, X1 = 1476, Y0 = 932, STEP = 92.15;
let grid = `<path d="M352.500 195V932"/>`, yl = '';
for (let i = 0; i <= 8; i++) {
  const y = Math.round(Y0 - i * STEP) + .5;
  grid += `<path d="M347 ${y}H${X1}"/>`;
  yl += `<text x="337" y="${y + 5}">${i * 50}</text>`;
}
byId('grid').innerHTML = grid;
byId('ylab').innerHTML = yl;

const times = 'Datum 00:28:00 00:57:00 01:26:00 01:55:00 02:24:04 02:53:04 03:22:04 03:51:03 04:20:03 04:49:03 05:18:03 05:47:02 06:16:02 06:45:02 07:14:00 07:43:00 08:12:00 08:41:05 09:10:00 09:39:00 10:08:00 10:37:00 11:06:01 11:35:01 12:04:08 12:33:00 13:02:09 13:31:00 14:00:01 14:29:02 14:58:00 15:27:00 15:56:08 16:25:00 16:54:01 17:23:08 17:52:00 18:21:01 18:50:00 19:19:00 19:48:09 20:17:09 20:46:09 21:15:09 21:44:09 22:13:09 22:42:02 23:11:02 23:40:01'.split(' ');
byId('xlab').innerHTML = times.map((t, i) => `<text transform="translate(${(358.5 + i * 22.57).toFixed(1)} 950) rotate(-90)">${t}</text>`).join('');

const series = [
  ['Gesamt', '#4a7ebb', 1, '352,932 670,932 677,931 679,926 681,931 691,930 692,915 697,907 703,898 706,820 711,780 719,707 727,657 739,593 749,543 765,493 774,471 779,458 786,440 792,428 798,418 800,423 802,415 807,408 814,406 819,403 823,406 830,402 838,407 846,414 854,419 862,433 872,452 881,468 890,488 897,512 905,530 915,560 927,592 931,607 943,635 951,651 955,653 957,658 964,661 972,652 980,633 987,622 994,597 1004,568 1010,547 1018,513 1024,497 1026,485 1036,457 1042,435 1047,420 1048,407 1054,390 1056,380 1063,360 1072,333 1073,323 1076,315 1078,307 1080,305 1084,311 1086,308 1088,296 1090,308 1093,303 1097,294 1101,290 1105,279 1108,275 1112,265 1119,254 1123,253 1127,246 1130,247 1132,242 1137,243 1140,246 1142,271 1143,286 1147,295 1162,324 1167,335 1169,360 1172,387 1174,397 1180,413 1185,437 1187,472 1188,487 1195,510 1200,538 1207,565 1213,605 1220,653 1226,700 1231,750 1233,800 1236,847 1239,897 1262,926 1264,932 1476,932'],
  ['Osten', '#be4b48', .9, '352,932 668,932 670,931 680,930 691,928 702,918 704,907 706,843 713,793 716,775 719,750 725,710 731,683 736,657 742,628 749,602 755,590 765,562 775,547 783,530 790,522 796,520 798,515 800,523 802,515 806,509 810,508 818,511 825,519 832,520 838,526 848,540 854,545 864,562 873,588 883,613 897,657 913,703 925,747 933,770 942,797 952,823 960,833 973,837 986,846 1007,852 1027,857 1046,865 1062,869 1070,875 1080,878 1101,880 1109,883 1142,885 1147,888 1154,898 1174,905 1211,914 1244,928 1260,932 1476,932'],
  ['Westen', '#98b954', .8, '352,932 668,932 680,931 692,928 721,913 750,902 782,891 815,883 856,877 905,872 935,869 946,863 964,858 971,849 975,838 986,810 997,775 1008,738 1020,697 1023,685 1030,657 1040,633 1047,607 1053,597 1065,565 1073,540 1085,512 1095,497 1103,485 1111,471 1121,467 1127,461 1132,458 1143,460 1150,462 1162,473 1174,493 1186,523 1194,547 1204,583 1214,630 1222,687 1230,757 1233,827 1236,887 1238,913 1250,924 1262,929 1268,931 1272,932 1476,932'],
  ['Sued1', '#7d60a0', 1.2, '352,932 668,932 670,931 692,929 701,926 721,915 762,900 795,891 817,888 827,882 848,879 864,881 880,877 905,877 937,875 1011,873 1023,862 1037,852 1046,847 1048,842 1056,836 1068,830 1078,824 1081,833 1085,847 1088,842 1091,858 1109,858 1119,855 1140,857 1143,883 1146,904 1154,908 1174,914 1211,919 1244,928 1260,932 1476,932'],
  ['Sued2', '#46aac5', 1.2, '352,932 692,932 701,928 742,914 782,903 789,897 813,896 823,890 864,887 884,882 925,878 954,876 1011,874 1031,874 1041,868 1046,868 1048,863 1064,851 1088,833 1109,817 1129,808 1142,804 1154,803 1164,804 1167,807 1169,827 1172,852 1181,857 1185,865 1187,887 1189,903 1197,910 1219,918 1240,927 1260,932 1476,932']
];
let seed = 7;
const rnd = () => (seed = seed * 16807 % 2147483647) / 2147483647 - .5;
byId('curves').innerHTML = series.map(([n, c, amp, raw]) => {
  const p = raw.split(' ').map(s => s.split(',').map(Number)), out = [];
  for (let i = 0; i < p.length - 1; i++) {
    const [ax, ay] = p[i], [bx, by] = p[i + 1], len = Math.hypot(bx - ax, by - ay), k = Math.max(1, Math.round(len / 3));
    for (let j = 0; j < k; j++) {
      const t = j / k, flat = ay > 924 && by > 924;
      out.push((ax + (bx - ax) * t).toFixed(1) + ',' + (ay + (by - ay) * t + (flat ? 0 : rnd() * 2 * amp)).toFixed(1));
    }
  }
  out.push(p.at(-1).join());
  return `<polyline stroke="${c}" points="${out.join(' ')}"/>`;
}).join('');
byId('legend').innerHTML = series.map(([n, c], i) => `<path d="M1504 ${539 + i * 33}h35" stroke="${c}" stroke-width="4" stroke-linecap="round"/><text x="1542" y="${544 + i * 33}">${n}</text>`).join('');
</script>
</body>
</html>
